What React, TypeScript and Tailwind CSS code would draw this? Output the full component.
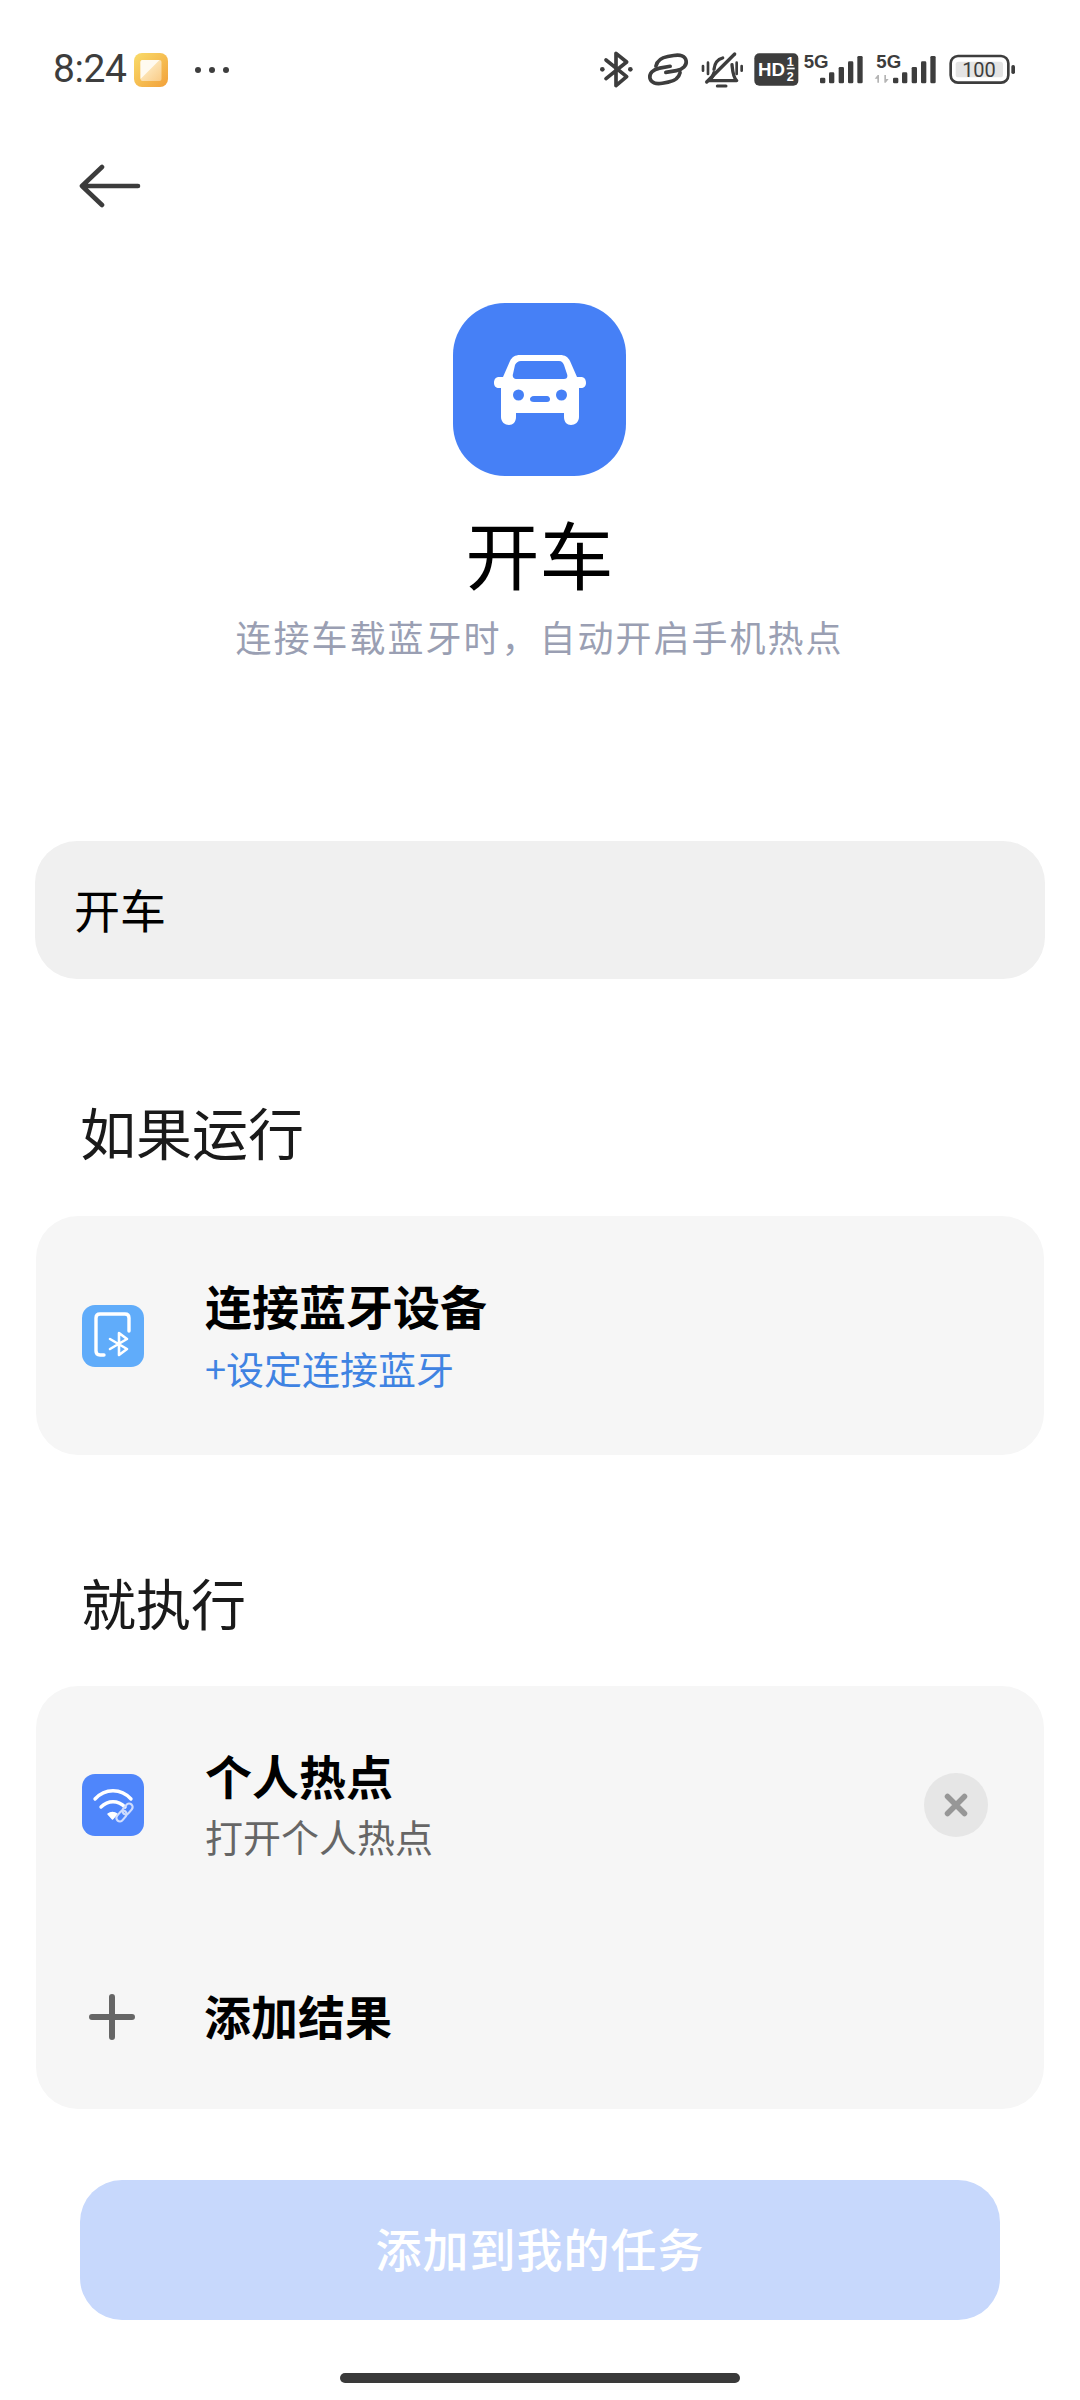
import React from "react";

const font = { fontFamily: '"Noto Sans CJK SC", "Noto Sans", sans-serif' };
const sans = { fontFamily: '"Liberation Sans", sans-serif' };
const ink = "#3d3d3d";

function Bars({ x }: { x: number }) {
  return (
    <g fill={ink} transform={`translate(${x} 0)`}>
      <rect x="0" y="143" width="16" height="17" rx="4" />
      <rect x="27" y="127" width="16" height="33" rx="4" />
      <rect x="56" y="111" width="16" height="49" rx="4" />
      <rect x="84" y="94" width="16" height="66" rx="4" />
      <rect x="112" y="78" width="16" height="82" rx="4" />
    </g>
  );
}

function StatusIcons() {
  return (
    <svg width="424" height="40" viewBox="48 60 1272 120" className="shrink-0">
      {/* bluetooth */}
      <g fill="none" stroke={ink} strokeWidth="11" strokeLinecap="round" strokeLinejoin="round">
        <path d="M78 90 L140 140 L108 167 V70 L140 96 L78 146" />
      </g>
      <circle cx="67" cy="118" r="7" fill={ink} />
      <circle cx="151" cy="118" r="7" fill={ink} />
      {/* link */}
      <g fill="none" stroke={ink} strokeWidth="11" strokeLinecap="round" strokeLinejoin="round" transform="rotate(-10 264 118)">
        <path d="M272 110 H240 C220 110 206 120 206 134 C206 148 220 156 240 156 H258 C278 156 292 148 298 134" />
        <path d="M256 126 H288 C308 126 322 116 322 102 C322 88 308 80 288 80 H270 C250 80 236 88 230 102" />
      </g>
      {/* silent bell */}
      <g fill="none" stroke={ink} strokeLinecap="round" strokeLinejoin="round">
        <path d="M369 108 V122 M384 98 V132 M470 98 V132 M485 108 V122" strokeWidth="8" />
        <path d="M402 118 C404 100 412 88 428 84 M456 104 C458 122 458 140 470 152 H386 C394 146 400 138 402 128" strokeWidth="10" />
        <path d="M380 156 L464 72" strokeWidth="10" />
        <path d="M412 168 H438" strokeWidth="9" />
      </g>
      {/* HD */}
      <rect x="523" y="70" width="132" height="97" rx="15" fill={ink} />
      <text x="534" y="139" fontSize="56" fontWeight="700" fill="#fff" style={sans}>HD</text>
      <text x="620" y="107" fontSize="38" fontWeight="700" fill="#fff" style={sans}>1</text>
      <rect x="620" y="113" width="24" height="5" fill="#fff" />
      <text x="620" y="153" fontSize="38" fontWeight="700" fill="#fff" style={sans}>2</text>
      {/* 5G 1 */}
      <text x="671" y="113" fontSize="56" fontWeight="700" fill={ink} style={sans}>5G</text>
      <Bars x={720} />
      {/* 5G 2 */}
      <text x="889" y="113" fontSize="56" fontWeight="700" fill={ink} style={sans}>5G</text>
      <g fill="#b4b4b4">
        <path d="M884 146 L893 135 H897 V158 H892 V146 Z" />
        <path d="M926 147 L917 158 H913 V135 H918 V147 Z" />
      </g>
      <Bars x={939} />
      {/* battery */}
      <rect x="1112" y="78" width="173" height="80" rx="22" fill="none" stroke={ink} strokeWidth="8" />
      <rect x="1127" y="95" width="142" height="47" rx="8" fill="#e4e4e4" />
      <text x="1197" y="141" textAnchor="middle" fontSize="60" fill={ink} style={{ fontFamily: "Roboto, sans-serif" }}>100</text>
      <rect x="1294" y="105" width="11" height="27" rx="5" fill={ink} />
    </svg>
  );
}

function Car() {
  return (
    <svg width="92" height="72" viewBox="0 0 92 72" fill="#fff">
      <path fillRule="evenodd" d="M26 1 H66 C71 1 74 3 76 7 L83 23 H87 C90 23 92 25 92 29 C92 32 90 34 87 34 H85 V63 C85 68 81 71 77 71 C73 71 70 68 70 63 V59 H22 V63 C22 68 19 71 15 71 C11 71 7 68 7 63 V34 H5 C2 34 0 32 0 29 C0 25 2 23 5 23 H9 L16 7 C18 3 21 1 26 1 Z M27 7 C24 7 22 9 21 11 L19 20 C18 23 20 25 22 25 H70 C73 25 74 23 73 20 L70 11 C69 9 68 7 65 7 Z M19 41 A5.5 5.5 0 1 0 30 41 A5.5 5.5 0 1 0 19 41 Z M62 41 A5.5 5.5 0 1 0 73 41 A5.5 5.5 0 1 0 62 41 Z M40 42 C37 42 36 44 36 45 C36 47 37 48 40 48 H53 C55 48 56 47 56 45 C56 44 55 42 53 42 Z" />
    </svg>
  );
}

function BluetoothDevice() {
  return (
    <svg width="62" height="62" viewBox="0 0 62 62" className="shrink-0">
      <rect width="62" height="62" rx="13" fill="#60acfa" />
      <path d="M22 50 H18 C15.5 50 14 48.5 14 46 V13 C14 10.5 15.5 9 18 9 H43 C45.5 9 47 10.5 47 13 V26" fill="none" stroke="#fff" strokeWidth="3.4" strokeLinecap="round" />
      <path d="M28 34 L45 44 L37 50 V28 L45 34 L28 44" fill="none" stroke="#fff" strokeWidth="2.6" strokeLinecap="round" strokeLinejoin="round" />
    </svg>
  );
}

function Hotspot() {
  return (
    <svg width="62" height="62" viewBox="0 0 62 62" className="shrink-0">
      <rect width="62" height="62" rx="13" fill="#4f86fb" />
      <g fill="none" stroke="#fff" strokeWidth="3.4" strokeLinecap="round">
        <path d="M13 25 C23 14 39 14 49 25" />
        <path d="M19 33 C26 26 36 26 43 33" />
      </g>
      <path d="M26 40 C28.5 38 32.5 38 35 40 L30.5 45 Z" fill="#fff" stroke="#fff" strokeWidth="1.5" strokeLinejoin="round" />
      <g fill="none" stroke="#cfdcfd" strokeWidth="2.2" strokeLinecap="round" strokeLinejoin="round">
        <rect x="42" y="29" width="7" height="12" rx="3.5" transform="rotate(40 45.5 35)" />
        <rect x="36" y="36" width="7" height="12" rx="3.5" transform="rotate(40 39.5 42)" />
      </g>
    </svg>
  );
}

export default function App() {
  return (
    <div className="w-[1080px] h-[2400px] bg-white overflow-hidden flex flex-col" style={font}>
      {/* status bar */}
      <div className="h-[138px] pt-[47px] pl-[53px] pr-[60px] flex items-start">
        <span className="text-[39px] leading-[44px] text-[#3d3d3d] w-[81px] tracking-[-0.4px]" style={{ fontFamily: "Roboto, sans-serif" }}>8:24</span>
        <svg width="34" height="34" viewBox="0 0 34 34" className="mt-[6px] shrink-0">
          <defs>
            <linearGradient id="noteBg" x1="0" y1="0" x2="1" y2="1">
              <stop offset="0" stopColor="#f9dc6a" />
              <stop offset="1" stopColor="#f2a03a" />
            </linearGradient>
            <linearGradient id="noteFold" x1="0" y1="0" x2="1" y2="1">
              <stop offset="0" stopColor="#fff6d8" />
              <stop offset="1" stopColor="#f9cb86" />
            </linearGradient>
          </defs>
          <rect width="34" height="34" rx="8" fill="url(#noteBg)" />
          <rect x="6.5" y="7" width="21" height="21" rx="2" fill="url(#noteFold)" />
          <path d="M6.5 26 V9 C6.5 8 7.5 7 8.5 7 H25.5 Z" fill="#fffaf0" />
        </svg>
        <div className="ml-[27px] mt-[20px] flex gap-[8px]">
          <div className="w-[6px] h-[6px] rounded-full bg-[#3d3d3d]" />
          <div className="w-[6px] h-[6px] rounded-full bg-[#3d3d3d]" />
          <div className="w-[6px] h-[6px] rounded-full bg-[#3d3d3d]" />
        </div>
        <div className="ml-auto mt-[3px]">
          <StatusIcons />
        </div>
      </div>

      {/* back */}
      <div className="h-[96px] pl-[79px] flex items-start">
        <svg width="62" height="44" viewBox="0 0 62 44" className="mt-[26px]">
          <path d="M3 22 H59 M23 3 L3 22 L23 41" fill="none" stroke="#3c3c3c" strokeWidth="4.6" strokeLinecap="round" strokeLinejoin="round" />
        </svg>
      </div>

      {/* hero */}
      <div className="flex flex-col items-center pt-[69px] pr-[1px]">
        <div className="w-[173px] h-[173px] rounded-[52px] bg-[#4680f6] flex items-center justify-center">
          <Car />
        </div>
        <div className="mt-[24px] text-[74px] leading-[104px] text-black">开车</div>
        <div className="mt-[7px] text-[36px] leading-[50px] text-[#9a9fb3] tracking-[2px]">连接车载蓝牙时，自动开启手机热点</div>
      </div>

      {/* name input */}
      <div className="mt-[180px] mx-[35px] h-[138px] rounded-[42px] bg-[#f0f0f0] flex items-center pl-[39px] pb-[3px] text-[46px] text-black">开车</div>

      {/* if */}
      <div className="mt-[112px] pl-[80px] text-[56px] leading-[80px] text-[#1a1a1a]">如果运行</div>
      <div className="mt-[45px] mx-[36px] h-[239px] rounded-[42px] bg-[#f6f6f6] flex items-center pl-[46px]">
        <BluetoothDevice />
        <div className="ml-[61px] pb-[3px] flex flex-col">
          <div className="text-[47px] leading-[60px] font-semibold text-black">连接蓝牙设备</div>
          <div className="mt-[8px] text-[38px] leading-[50px] text-[#3f83e2]">+设定连接蓝牙</div>
        </div>
      </div>

      {/* then */}
      <div className="mt-[106px] pl-[81px] text-[55px] leading-[80px] text-[#1a1a1a]">就执行</div>
      <div className="mt-[45px] mx-[36px] h-[423px] rounded-[42px] bg-[#f6f6f6] flex flex-col">
        <div className="h-[238px] flex items-center pl-[46px] pr-[56px]">
          <Hotspot />
          <div className="ml-[61px] pb-[4px] flex flex-col flex-1">
            <div className="text-[47px] leading-[60px] font-semibold text-black">个人热点</div>
            <div className="mt-[6px] text-[38px] leading-[50px] text-[#666666]">打开个人热点</div>
          </div>
          <div className="w-[64px] h-[64px] rounded-full bg-[#e6e6e6] flex items-center justify-center">
            <svg width="24" height="24" viewBox="0 0 24 24">
              <path d="M3.5 3.5 L20.5 20.5 M20.5 3.5 L3.5 20.5" stroke="#979797" strokeWidth="5.5" strokeLinecap="round" />
            </svg>
          </div>
        </div>
        <div className="flex items-center pl-[53px] h-[185px]">
          <svg width="46" height="46" viewBox="0 0 46 46" className="shrink-0">
            <path d="M23 3 V43 M3 23 H43" stroke="#666666" strokeWidth="6" strokeLinecap="round" />
          </svg>
          <div className="ml-[69px] pb-[4px] text-[47px] leading-[60px] font-semibold text-black">添加结果</div>
        </div>
      </div>

      {/* submit */}
      <div className="mt-[71px] mx-[80px] h-[140px] rounded-[42px] bg-[#c7d8fc] flex items-center justify-center pb-[5px] text-[46px] text-white font-medium tracking-[1px]">添加到我的任务</div>

      {/* home bar */}
      <div className="mt-[53px] mx-auto w-[400px] h-[10px] rounded-full bg-[#3a3a3a]" />
    </div>
  );
}
